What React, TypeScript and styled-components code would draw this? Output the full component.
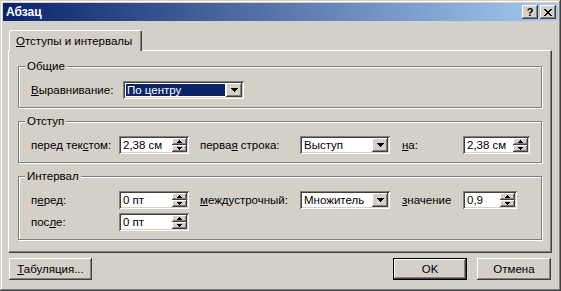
import React from 'react';
import styled, { createGlobalStyle } from 'styled-components';

const FACE = '#D4D0C8';
const FONT = '"Liberation Sans", Arial, sans-serif';
const SIZE = '11.5px';

const Global = createGlobalStyle`
  html, body { margin: 0; padding: 0; background: ${FACE}; }
  body { font-family: ${FONT}; font-size: ${SIZE}; color: #000; }
  * { box-sizing: border-box; }
`;

const Window = styled.div`
  width: 561px;
  height: 291px;
  padding: 3px;
  display: flex;
  flex-direction: column;
  background: ${FACE};
  box-shadow: inset -1px -1px #404040, inset 1px 1px ${FACE}, inset -2px -2px #808080, inset 2px 2px #fff;
`;

const TitleBar = styled.div`
  height: 18px;
  display: flex;
  align-items: center;
  padding: 0 2px 0 3px;
  background: linear-gradient(to right, #0a246a, #a6caf0);
`;

const TitleText = styled.span`
  flex: 1;
  color: #fff;
  font-weight: bold;
  font-size: 12px;
  line-height: 18px;
`;

const CaptionButtons = styled.div`
  display: flex;
  gap: 2px;
`;

const CaptionButton = styled.div`
  width: 16px;
  height: 14px;
  display: flex;
  align-items: center;
  justify-content: center;
  background: ${FACE};
  box-shadow: inset -1px -1px #404040, inset 1px 1px #fff, inset -2px -2px #808080;
  font-weight: bold;
  font-size: 11px;
  line-height: 14px;
`;

const Body = styled.div`
  flex: 1;
  display: flex;
  flex-direction: column;
  padding: 9px 6px 8px 5px;
`;

const TabStrip = styled.div`
  display: flex;
  height: 21px;
  margin-bottom: -1px;
  padding-left: 1px;
`;

const Tab = styled.div`
  position: relative;
  z-index: 1;
  height: 21px;
  padding: 0 9px 0 6px;
  line-height: 20px;
  background: ${FACE};
  border-top: 1px solid #fff;
  border-left: 1px solid #fff;
  border-right: 1px solid #404040;
  border-radius: 2px 2px 0 0;
  box-shadow: inset -1px 0 #808080;
`;

const Panel = styled.div`
  flex: 1;
  display: flex;
  flex-direction: column;
  gap: 7px;
  padding: 9px 9px 0 9px;
  border-top: 1px solid #fff;
  border-left: 1px solid #fff;
  border-right: 1px solid #404040;
  border-bottom: 1px solid #404040;
  box-shadow: inset -1px -1px #808080;
`;

const Group = styled.fieldset`
  margin: 0;
  padding: 0;
  min-inline-size: 0;
  border: 1px solid #808080;
  box-shadow: inset 1px 1px #fff, 1px 1px #fff;
`;

const Legend = styled.legend`
  margin-left: 6px;
  padding: 0 2px;
  line-height: 13px;
  background: ${FACE};
`;

const GroupBody = styled.div`
  display: flex;
  flex-direction: column;
  gap: 4px;
  padding: 8px 0 8px 12px;
`;

const Row = styled.div<{ $cols: string }>`
  display: grid;
  grid-template-columns: ${(p) => p.$cols};
  align-items: center;
  height: 18px;
`;

const Label = styled.span`
  white-space: nowrap;
`;

const Key = styled.span`
  text-decoration: underline;
`;

const Sunken = styled.div<{ $w: number }>`
  width: ${(p) => p.$w}px;
  height: 18px;
  padding: 2px;
  display: flex;
  background: #fff;
  box-shadow: inset 1px 1px #808080, inset -1px -1px #fff, inset 2px 2px #404040, inset -2px -2px ${FACE};
`;

const FieldText = styled.span<{ $selected?: boolean }>`
  flex: 1;
  margin: ${(p) => (p.$selected ? '1px' : '0')};
  padding-left: ${(p) => (p.$selected ? '1px' : '2px')};
  line-height: ${(p) => (p.$selected ? '12px' : '14px')};
  white-space: nowrap;
  overflow: hidden;
  color: ${(p) => (p.$selected ? '#fff' : '#000')};
  background: ${(p) => (p.$selected ? '#0a246a' : 'transparent')};
`;

const DropButton = styled.div`
  width: 16px;
  height: 14px;
  display: flex;
  align-items: center;
  justify-content: center;
  background: ${FACE};
  box-shadow: inset -1px -1px #404040, inset 1px 1px #fff, inset -2px -2px #808080;
`;

const SpinButtons = styled.div`
  width: 15px;
  display: flex;
  flex-direction: column;
`;

const SpinButton = styled.div`
  flex: 1;
  display: flex;
  align-items: center;
  justify-content: center;
  background: ${FACE};
  box-shadow: inset -1px -1px #404040, inset 1px 1px #fff, inset -2px -2px #808080;
`;

const ButtonRow = styled.div`
  display: flex;
  align-items: center;
  margin-top: 5px;
  padding: 0 1px 0 1px;
`;

const RightButtons = styled.div`
  margin-left: auto;
  display: flex;
  gap: 10px;
`;

const Button = styled.button<{ $w: number; $default?: boolean }>`
  width: ${(p) => p.$w}px;
  height: 22px;
  padding: 0;
  margin: 0;
  font-family: ${FONT};
  font-size: ${SIZE};
  font-weight: normal;
  color: #000;
  background: ${FACE};
  border: ${(p) => (p.$default ? '1px solid #000' : 'none')};
  box-shadow: inset -1px -1px #404040, inset 1px 1px #fff, inset -2px -2px #808080;
`;

const DownArrow = () => (
  <svg width="7" height="4" viewBox="0 0 7 4" shapeRendering="crispEdges">
    <path d="M0 0h7v1H0z M1 1h5v1H1z M2 2h3v1H2z M3 3h1v1H3z" fill="#000" />
  </svg>
);

const SpinUp = () => (
  <svg width="5" height="3" viewBox="0 0 5 3" shapeRendering="crispEdges">
    <path d="M2 0h1v1H2z M1 1h3v1H1z M0 2h5v1H0z" fill="#000" />
  </svg>
);

const SpinDown = () => (
  <svg width="5" height="3" viewBox="0 0 5 3" shapeRendering="crispEdges">
    <path d="M0 0h5v1H0z M1 1h3v1H1z M2 2h1v1H2z" fill="#000" />
  </svg>
);

const CloseIcon = () => (
  <svg width="8" height="7" viewBox="0 0 8 7" shapeRendering="crispEdges">
    <path
      d="M0 0h2v1H0z M6 0h2v1H6z M1 1h2v1H1z M5 1h2v1H5z M2 2h4v1H2z M3 3h2v1H3z M2 4h4v1H2z M1 5h2v1H1z M5 5h2v1H5z M0 6h2v1H0z M6 6h2v1H6z"
      fill="#000"
    />
  </svg>
);

const Combo = ({ w, value, selected }: { w: number; value: string; selected?: boolean }) => (
  <Sunken $w={w}>
    <FieldText $selected={selected}>{value}</FieldText>
    <DropButton>
      <DownArrow />
    </DropButton>
  </Sunken>
);

const Spin = ({ w, value }: { w: number; value: string }) => (
  <Sunken $w={w}>
    <FieldText>{value}</FieldText>
    <SpinButtons>
      <SpinButton>
        <SpinUp />
      </SpinButton>
      <SpinButton>
        <SpinDown />
      </SpinButton>
    </SpinButtons>
  </Sunken>
);

const COLS = '88px 81px 100px 102px 61px auto';

export default function App() {
  return (
    <>
      <Global />
      <Window>
        <TitleBar>
          <TitleText>Абзац</TitleText>
          <CaptionButtons>
            <CaptionButton>?</CaptionButton>
            <CaptionButton>
              <CloseIcon />
            </CaptionButton>
          </CaptionButtons>
        </TitleBar>
        <Body>
          <TabStrip>
            <Tab>
              <Key>О</Key>тступы и интервалы
            </Tab>
          </TabStrip>
          <Panel>
            <Group>
              <Legend>Общие</Legend>
              <GroupBody>
                <Row $cols="92px auto">
                  <Label>
                    <Key>В</Key>ыравнивание:
                  </Label>
                  <Combo w={121} value="По центру" selected />
                </Row>
              </GroupBody>
            </Group>
            <Group>
              <Legend>Отступ</Legend>
              <GroupBody>
                <Row $cols={COLS}>
                  <Label>
                    перед тек<Key>с</Key>том:
                  </Label>
                  <Spin w={70} value="2,38 см" />
                  <Label>
                    перва<Key>я</Key> строка:
                  </Label>
                  <Combo w={90} value="Выступ" />
                  <Label>
                    <Key>н</Key>а:
                  </Label>
                  <Spin w={67} value="2,38 см" />
                </Row>
              </GroupBody>
            </Group>
            <Group>
              <Legend>Интервал</Legend>
              <GroupBody>
                <Row $cols={COLS}>
                  <Label>
                    п<Key>е</Key>ред:
                  </Label>
                  <Spin w={70} value="0 пт" />
                  <Label>
                    <Key>м</Key>еждустрочный:
                  </Label>
                  <Combo w={90} value="Множитель" />
                  <Label>
                    <Key>з</Key>начение
                  </Label>
                  <Spin w={54} value="0,9" />
                </Row>
                <Row $cols={COLS}>
                  <Label>
                    пос<Key>л</Key>е:
                  </Label>
                  <Spin w={70} value="0 пт" />
                </Row>
              </GroupBody>
            </Group>
          </Panel>
          <ButtonRow>
            <Button $w={83}>
              <Key>Т</Key>абуляция...
            </Button>
            <RightButtons>
              <Button $w={74} $default>
                OK
              </Button>
              <Button $w={74}>Отмена</Button>
            </RightButtons>
          </ButtonRow>
        </Body>
      </Window>
    </>
  );
}
